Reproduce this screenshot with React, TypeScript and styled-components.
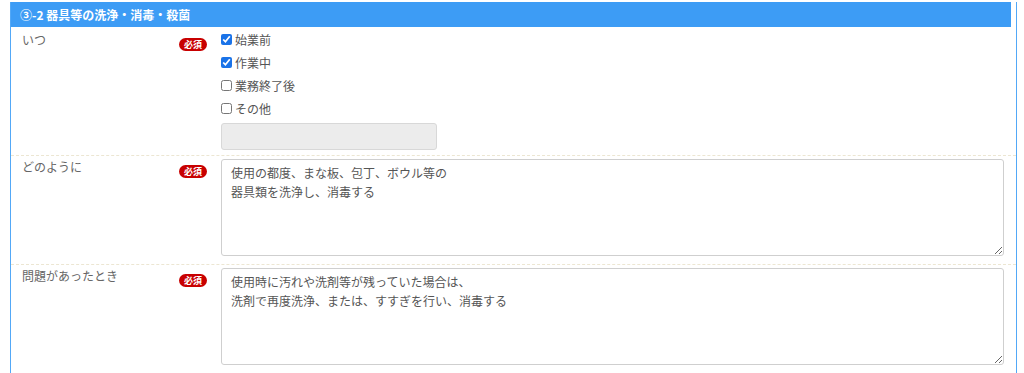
import React from 'react'
import styled, { createGlobalStyle } from 'styled-components'

const blue = '#3d9cf5'
const border = '#52a8f7'
const labelGray = '#666'
const textGray = '#555'

const GlobalStyle = createGlobalStyle`
  html, body {
    margin: 0;
    padding: 0;
    background: #fff;
  }
  body {
    font-family: "Noto Sans CJK JP", "Noto Sans", sans-serif;
    font-size: 12px;
    color: ${textGray};
  }
`

type Item = { label: string; checked: boolean }
const timings: Item[] = [
  { label: '始業前', checked: true },
  { label: '作業中', checked: true },
  { label: '業務終了後', checked: false },
  { label: 'その他', checked: false },
]

export default function App() {
  return (
    <>
      <GlobalStyle />
      <Page>
        <Panel>
          <Header>③-2 器具等の洗浄・消毒・殺菌</Header>
          <Row $first>
            <Label $top={4}>いつ</Label>
            <BadgeCell $top={6}>
              <Badge>必須</Badge>
            </BadgeCell>
            <Field>
              <CheckList>
                {timings.map((t) => (
                  <CheckItem key={t.label}>
                    <Check type="checkbox" defaultChecked={t.checked} />
                    {t.label}
                  </CheckItem>
                ))}
              </CheckList>
              <OtherInput disabled />
            </Field>
          </Row>
          <Row>
            <Label $top={0}>どのように</Label>
            <BadgeCell $top={2}>
              <Badge>必須</Badge>
            </BadgeCell>
            <Field>
              <TextArea
                defaultValue={
                  '使用の都度、まな板、包丁、ボウル等の\n器具類を洗浄し、消毒する'
                }
              />
            </Field>
          </Row>
          <Row $last>
            <Label $top={0}>問題があったとき</Label>
            <BadgeCell $top={2}>
              <Badge>必須</Badge>
            </BadgeCell>
            <Field>
              <TextArea
                defaultValue={
                  '使用時に汚れや洗剤等が残っていた場合は、\n洗剤で再度洗浄、または、すすぎを行い、消毒する'
                }
              />
            </Field>
          </Row>
        </Panel>
      </Page>
    </>
  )
}

const Page = styled.div`
  padding: 2px 7px 0 10px;
  height: 371px;
  overflow: hidden;
`
const Panel = styled.section`
  border-left: 1px solid ${border};
  border-right: 1px solid ${border};
  min-height: 371px;
`
const Header = styled.h2`
  margin: 0 5px 0 0;
  height: 25px;
  line-height: 25px;
  padding-left: 9px;
  background: ${blue};
  color: #fff;
  font-size: 12px;
  font-weight: bold;
`
const Row = styled.div<{ $first?: boolean; $last?: boolean }>`
  display: grid;
  grid-template-columns: 168px 42px 1fr;
  padding: ${({ $first }) => ($first ? '1px 12px 5px 0' : '3px 12px 8px 0')};
  border-bottom: ${({ $last }) => ($last ? 'none' : '1px dashed #ece6d2')};
`
const Label = styled.div<{ $top: number }>`
  padding-left: 11px;
  padding-top: ${({ $top }) => $top}px;
  line-height: 16px;
  color: ${labelGray};
  font-size: 12px;
`
const BadgeCell = styled.div<{ $top: number }>`
  padding-top: ${({ $top }) => $top}px;
`
const Badge = styled.span`
  display: inline-block;
  width: 28px;
  height: 13px;
  line-height: 13px;
  border-radius: 7px;
  background: #c80000;
  color: #fff;
  font-size: 9px;
  font-weight: bold;
  text-align: center;
`
const Field = styled.div`
  display: flex;
  flex-direction: column;
`
const CheckList = styled.div`
  display: flex;
  flex-direction: column;
`
const CheckItem = styled.label`
  display: flex;
  align-items: center;
  height: 23px;
  color: ${textGray};
  font-size: 12px;
`
const Check = styled.input`
  width: 11px;
  height: 11px;
  margin: 0 3px 0 0;
  accent-color: #1a73e8;
`
const OtherInput = styled.input`
  margin-top: 3px;
  width: 216px;
  height: 27px;
  box-sizing: border-box;
  border: 1px solid #d8d8d8;
  border-radius: 3px;
  background: #ececec;
`
const TextArea = styled.textarea`
  box-sizing: border-box;
  width: 100%;
  height: 97px;
  margin: 0;
  padding: 3px 9px;
  border: 1px solid #cfcfcf;
  border-radius: 3px;
  font-family: "Noto Sans CJK JP", "Noto Sans", sans-serif;
  font-size: 12px;
  line-height: 19px;
  color: ${textGray};
  resize: vertical;
`
